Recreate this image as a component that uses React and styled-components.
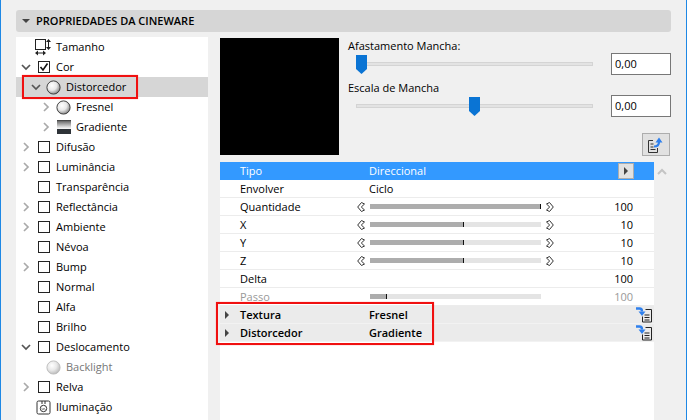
import React from 'react'
import styled, { createGlobalStyle } from 'styled-components'

const Global = createGlobalStyle`
html,body{margin:0;padding:0;}
body{font-family:"Open Sans","Noto Sans",sans-serif;font-size:11px;color:#000;}
`

const Page = styled.div`
width:687px;
height:420px;
box-sizing:border-box;
position:relative;
overflow:hidden;
background:#f0f0f0;
border-left:1px solid #1e88e5;
border-right:1px solid #1e88e5;
padding:10px 15px 0;
`

const Header = styled.div`
height:22px;
background:#d6d6d6;
border-radius:3px;
display:flex;
align-items:center;
gap:6px;
padding-left:6px;
font-weight:600;
color:#000;
`

const HeaderText = styled.span`
margin-bottom:1px;
`

const Caret = styled.span`
width:0;
height:0;
border-left:4px solid transparent;
border-right:4px solid transparent;
border-top:4px solid #444;
`

const Body = styled.div`
display:flex;
gap:12px;
margin-top:5px;
`

const Tree = styled.div`
width:192px;
height:383px;
background:#fff;
flex:none;
`

const TreeRow = styled.div`
height:20px;
display:flex;
align-items:center;
padding-left:${p => 4 + p.$level * 10}px;
background:${p => (p.$selected ? '#d6d6d6' : 'transparent')};
color:${p => (p.$dim ? '#777' : '#000')};
`

const TreeLabel = styled.span`
margin-bottom:2px;
`

const ChevronSlot = styled.span`
width:15px;
height:14px;
flex:none;
display:flex;
align-items:center;
padding-left:1px;
box-sizing:border-box;
`

const IconSlot = styled.span`
width:17px;
height:17px;
flex:none;
display:flex;
align-items:center;
justify-content:center;
margin-right:4px;
`

const Box = styled.span`
width:10px;
height:10px;
border:1px solid #222;
background:#fff;
display:block;
`

const Right = styled.div`
flex:1;
display:flex;
flex-direction:column;
`

const Top = styled.div`
display:flex;
height:125px;
padding-top:1px;
box-sizing:border-box;
`

const Preview = styled.div`
width:119px;
height:117px;
background:#000;
flex:none;
margin-right:9px;
`

const Controls = styled.div`
flex:1;
display:flex;
flex-direction:column;
`

const SliderBlock = styled.div`
height:42px;
`

const SliderLabel = styled.div`
height:15px;
line-height:15px;
`

const SliderRow = styled.div`
display:flex;
align-items:center;
height:22px;
`

const TrackWrap = styled.div`
width:237px;
margin-left:8px;
height:4px;
background:#e3e3e3;
border:1px solid #d4d4d4;
box-sizing:border-box;
position:relative;
`

const Thumb = styled.svg`
position:absolute;
top:-8px;
left:${p => p.$left}px;
`

const ValueInput = styled.div`
width:60px;
height:22px;
box-sizing:border-box;
margin-left:18px;
border:1px solid #777;
background:#fff;
display:flex;
align-items:center;
padding:0 0 1px 3px;
`

const ToolRow = styled.div`
display:flex;
justify-content:flex-end;
margin-top:11px;
padding-right:1px;
`

const ToolButton = styled.div`
width:26px;
height:21px;
background:#e1e1e1;
border:1px solid #adadad;
display:flex;
align-items:center;
justify-content:center;
`

const TableArea = styled.div`
display:flex;
`

const Table = styled.div`
width:434px;
height:258px;
background:#fff;
flex:none;
`

const Scroll = styled.div`
flex:1;
display:flex;
justify-content:center;
padding:6px 2px 0 0;
`

const Row = styled.div`
height:18px;
box-sizing:border-box;
display:flex;
align-items:center;
background:${p => (p.$active ? '#3399ff' : p.$group ? '#ebebeb' : '#fff')};
color:${p => (p.$active ? '#fff' : p.$dim ? '#999' : '#000')};
font-weight:${p => (p.$group ? 600 : 400)};
border-bottom:1px solid ${p => (p.$active ? '#3399ff' : p.$group ? '#f2f2f2' : '#ececec')};
`

const Expander = styled.span`
width:20px;
flex:none;
display:flex;
justify-content:center;
padding-right:6px;
box-sizing:border-box;
`

const Triangle = styled.span`
width:0;
height:0;
border-top:4px solid transparent;
border-bottom:4px solid transparent;
border-left:4px solid #444;
`

const Name = styled.span`
width:129px;
flex:none;
margin-bottom:1px;
`

const SliderName = styled(Name)`
width:117px;
`

const Value = styled.span`
flex:1;
margin-bottom:1px;
`

const PlayButton = styled.span`
width:14px;
height:14px;
margin-right:20px;
background:#e1e1e1;
border:1px solid #adadad;
display:flex;
align-items:center;
justify-content:center;
`

const BarTrack = styled.div`
width:171px;
height:5px;
margin:0 5px;
background:#e4e4e4;
position:relative;
`

const BarFill = styled.div`
height:5px;
background:#adadad;
border-right:1px solid #111;
box-sizing:border-box;
`

const Num = styled.span`
width:79px;
text-align:right;
margin-bottom:1px;
`

const Spacer = styled.span`
width:${p => p.$w}px;
flex:none;
`

const RowIcon = styled.span`
margin-left:auto;
margin-right:2px;
display:flex;
`

const Mark = styled.div`
position:absolute;
border:2px solid #f01010;
box-shadow:0 0 1px #f88;
box-sizing:border-box;
pointer-events:none;
left:${p => p.$x}px;
top:${p => p.$y}px;
width:${p => p.$w}px;
height:${p => p.$h}px;
`

const Chevron = ({ dir }) => (
  <svg width="10" height="10" viewBox="0 0 10 10">
    {dir === 'down'
      ? <path d="M1 3l4 4 4-4" fill="none" stroke="#555" strokeWidth="1.7" />
      : <path d="M3 1l4 4-4 4" fill="none" stroke="#aaa" strokeWidth="1.7" />}
  </svg>
)

const Sphere = ({ id, dim }) => (
  <svg width="15" height="15" viewBox="0 0 15 15">
    <defs>
      <radialGradient id={id} cx="0.38" cy="0.35" r="0.72">
        <stop offset="0" stopColor="#fff" />
        <stop offset="0.5" stopColor="#e8e8e8" />
        <stop offset="0.85" stopColor={dim ? '#c4c4c4' : '#9a9a9a'} />
        <stop offset="1" stopColor={dim ? '#aaa' : '#666'} />
      </radialGradient>
    </defs>
    <circle cx="7.5" cy="7.5" r="6.6" fill={`url(#${id})`} stroke={dim ? '#bbb' : '#333'} strokeWidth="0.9" />
  </svg>
)

const GradientIcon = () => (
  <svg width="14" height="14" viewBox="0 0 14 14">
    <defs>
      <linearGradient id="gr" x1="0" y1="0" x2="0" y2="1">
        <stop offset="0" stopColor="#333" />
        <stop offset="0.12" stopColor="#777" />
        <stop offset="0.5" stopColor="#ddd" />
        <stop offset="0.62" stopColor="#f5f5f5" />
        <stop offset="0.63" stopColor="#2e3338" />
        <stop offset="1" stopColor="#2e3338" />
      </linearGradient>
    </defs>
    <rect width="14" height="14" fill="url(#gr)" />
  </svg>
)

const SizeIcon = () => (
  <svg width="17" height="17" viewBox="0 0 17 17">
    <rect x="0.5" y="0.5" width="10" height="10" fill="#fff" stroke="#222" />
    <path d="M13.5 1v9M1 14h9" fill="none" stroke="#222" />
    <path d="M13.5 0l2.5 3h-5zM13.5 11l2.5-3h-5zM0 14l3-2.5v5zM11 14l-3-2.5v5z" fill="#222" />
  </svg>
)

const LightIcon = () => (
  <svg width="15" height="15" viewBox="0 0 15 15">
    <rect x="1" y="1" width="13" height="13" rx="1.5" fill="#fff" stroke="#333" />
    <circle cx="7.5" cy="8.5" r="3.2" fill="none" stroke="#333" />
    <path d="M6 1v3M9 1v3M6 8.5l1 1 1-1 1 1" fill="none" stroke="#333" />
  </svg>
)

const Check = () => (
  <svg width="12" height="12" viewBox="0 0 12 12">
    <rect x="0.5" y="0.5" width="11" height="11" fill="#fff" stroke="#222" />
    <path d="M2.5 6l2.5 3 4.5-6.5" fill="none" stroke="#111" strokeWidth="1.6" />
  </svg>
)

const DoubleArrow = ({ flip }) => (
  <svg width="8" height="10" viewBox="0 0 8 10" style={flip ? { transform: 'scaleX(-1)' } : undefined}>
    <path d="M4.5 0.5L0.7 5l3.8 4.5L7.5 8 4.3 5l3.2-3z" fill="#fff" stroke="#333" strokeWidth="1" />
  </svg>
)

const DocOut = () => (
  <svg width="18" height="16" viewBox="0 0 18 16">
    <path d="M6 3.5H1.5v12h9V11" fill="none" stroke="#333" />
    <path d="M3.5 7h3M3.5 10h3M3.5 12.5h5" stroke="#333" />
    <path d="M7 9.5c3.5 0 5-1 5-4.5" fill="none" stroke="#2f80ed" strokeWidth="2.2" />
    <path d="M8.5 5.5L12 0.5l3.5 5z" fill="#2f80ed" />
  </svg>
)

const DocIn = () => (
  <svg width="16" height="16" viewBox="0 0 16 16">
    <path d="M9.5 2.5h6v12.5h-9v-5.5" fill="none" stroke="#222" />
    <path d="M8.5 8h5M8.5 10.5h5M8.5 13h5" stroke="#222" />
    <path d="M0 1.5h3.5c1.5 0 2.5 1 2.5 3" fill="none" stroke="#2f80ed" strokeWidth="2.4" />
    <path d="M2.5 4.5h7L6 9z" fill="#2f80ed" />
  </svg>
)

const treeItems = [
  { label: 'Tamanho', level: 0, icon: 'size' },
  { label: 'Cor', level: 0, chevron: 'down', icon: 'check' },
  { label: 'Distorcedor', level: 1, chevron: 'down', icon: 'sphere', selected: true },
  { label: 'Fresnel', level: 2, chevron: 'right', icon: 'sphere' },
  { label: 'Gradiente', level: 2, chevron: 'right', icon: 'gradient' },
  { label: 'Difusão', level: 0, chevron: 'right', icon: 'box' },
  { label: 'Luminância', level: 0, chevron: 'right', icon: 'box' },
  { label: 'Transparência', level: 0, icon: 'box' },
  { label: 'Reflectância', level: 0, chevron: 'right', icon: 'box' },
  { label: 'Ambiente', level: 0, chevron: 'right', icon: 'box' },
  { label: 'Névoa', level: 0, icon: 'box' },
  { label: 'Bump', level: 0, chevron: 'right', icon: 'box' },
  { label: 'Normal', level: 0, icon: 'box' },
  { label: 'Alfa', level: 0, icon: 'box' },
  { label: 'Brilho', level: 0, icon: 'box' },
  { label: 'Deslocamento', level: 0, chevron: 'down', icon: 'box' },
  { label: 'Backlight', level: 1, icon: 'sphere', dim: true },
  { label: 'Relva', level: 0, chevron: 'right', icon: 'box' },
  { label: 'Iluminação', level: 0, icon: 'light' },
]

const renderIcon = (item, i) => {
  if (item.icon === 'size') return <SizeIcon />
  if (item.icon === 'check') return <Check />
  if (item.icon === 'sphere') return <Sphere id={`sp${i}`} dim={item.dim} />
  if (item.icon === 'gradient') return <GradientIcon />
  if (item.icon === 'light') return <LightIcon />
  return <Box />
}

const sliderRows = [
  { name: 'Quantidade', pct: 100, num: 100 },
  { name: 'X', pct: 55, num: 10 },
  { name: 'Y', pct: 55, num: 10 },
  { name: 'Z', pct: 55, num: 10 },
]

const ThumbShape = ({ left }) => (
  <Thumb $left={left} width="11" height="19" viewBox="0 0 11 19">
    <path d="M0 0h11v14l-5.5 5L0 14z" fill="#0a74d4" />
  </Thumb>
)

const App = () => {
  return (
    <Page>
      <Global />
      <Header><Caret /><HeaderText>PROPRIEDADES DA CINEWARE</HeaderText></Header>
      <Body>
        <Tree>
          {treeItems.map((item, i) => (
            <TreeRow key={item.label} $level={item.level} $selected={item.selected} $dim={item.dim}>
              <ChevronSlot>{item.chevron && <Chevron dir={item.chevron} />}</ChevronSlot>
              <IconSlot>{renderIcon(item, i)}</IconSlot>
              <TreeLabel>{item.label}</TreeLabel>
            </TreeRow>
          ))}
        </Tree>
        <Right>
          <Top>
            <Preview />
            <Controls>
              <SliderBlock>
                <SliderLabel>Afastamento Mancha:</SliderLabel>
                <SliderRow>
                  <TrackWrap><ThumbShape left={-1} /></TrackWrap>
                  <ValueInput>0,00</ValueInput>
                </SliderRow>
              </SliderBlock>
              <SliderBlock>
                <SliderLabel>Escala de Mancha</SliderLabel>
                <SliderRow>
                  <TrackWrap><ThumbShape left={112} /></TrackWrap>
                  <ValueInput>0,00</ValueInput>
                </SliderRow>
              </SliderBlock>
              <ToolRow><ToolButton><DocOut /></ToolButton></ToolRow>
            </Controls>
          </Top>
          <TableArea>
            <Table>
              <Row $active>
                <Expander />
                <Name>Tipo</Name>
                <Value>Direccional</Value>
                <PlayButton><Triangle /></PlayButton>
              </Row>
              <Row>
                <Expander />
                <Name>Envolver</Name>
                <Value>Ciclo</Value>
              </Row>
              {sliderRows.map(r => (
                <Row key={r.name}>
                  <Expander />
                  <SliderName>{r.name}</SliderName>
                  <DoubleArrow />
                  <BarTrack><BarFill style={{ width: `${r.pct}%` }} /></BarTrack>
                  <DoubleArrow flip />
                  <Num>{r.num}</Num>
                </Row>
              ))}
              <Row>
                <Expander />
                <Name>Delta</Name>
                <Value />
                <Num>100</Num>
                <Spacer $w={21} />
              </Row>
              <Row $dim>
                <Expander />
                <SliderName>Passo</SliderName>
                <Spacer $w={8} />
                <BarTrack><BarFill style={{ width: '10%' }} /></BarTrack>
                <Spacer $w={8} />
                <Num>100</Num>
              </Row>
              <Row $group>
                <Expander><Triangle /></Expander>
                <Name>Textura</Name>
                <span>Fresnel</span>
                <RowIcon><DocIn /></RowIcon>
              </Row>
              <Row $group>
                <Expander><Triangle /></Expander>
                <Name>Distorcedor</Name>
                <span>Gradiente</span>
                <RowIcon><DocIn /></RowIcon>
              </Row>
            </Table>
            <Scroll>
              <svg width="10" height="7" viewBox="0 0 10 7"><path d="M1 6l4-4 4 4" fill="none" stroke="#c4c4c4" strokeWidth="2" /></svg>
            </Scroll>
          </TableArea>
        </Right>
      </Body>
      <Mark $x={21} $y={75} $w={116} $h={24} />
      <Mark $x={215} $y={302} $w={218} $h={43} />
    </Page>
  )
}

export default App
